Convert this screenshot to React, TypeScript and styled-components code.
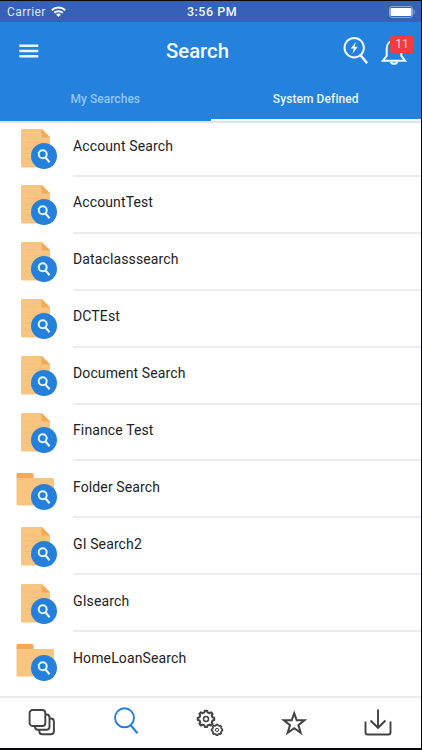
import React from 'react';
import styled, { createGlobalStyle } from 'styled-components';

const GlobalStyle = createGlobalStyle`
  * { box-sizing: border-box; }
  body { margin: 0; background: #000; }
`;

const Screen = styled.div`
  width: 422px;
  height: 750px;
  display: flex;
  flex-direction: column;
  background: #fff;
  border: solid #05070c;
  border-width: 1px 1px 2px 0;
  overflow: hidden;
  font-family: Roboto, 'Liberation Sans', sans-serif;
`;

const StatusBar = styled.div`
  height: 21px;
  flex: none;
  display: grid;
  grid-template-columns: 1fr auto 1fr;
  align-items: center;
  padding: 0 5px 0 7px;
  background: #3561b6;
  color: #dce8fa;
  font-size: 12px;
  letter-spacing: 0.42px;
`;

const Carrier = styled.div`
  display: flex;
  align-items: center;
  gap: 5px;
`;

const Clock = styled.div`
  padding-left: 1px;
  color: #f4f8ff;
  font-weight: 500;
  font-size: 12.5px;
  letter-spacing: 0.5px;
`;

const Battery = styled.svg`
  justify-self: end;
`;

const Header = styled.header`
  height: 58px;
  flex: none;
  display: grid;
  grid-template-columns: 75px 1fr 90px;
  align-items: center;
  padding: 0 0 0 19px;
  background: #2481de;
`;

const Title = styled.h1`
  margin: 0 37px 0 0;
  padding-left: 7px;
  text-align: center;
  color: #f2fbff;
  font-size: 20.3px;
  font-weight: 500;
  line-height: 24px;
`;

const Actions = styled.div`
  display: flex;
  align-items: center;
  gap: 12px;
  padding-left: 12px;
`;

const BellBox = styled.div`
  position: relative;
  height: 28px;
`;

const Badge = styled.span`
  position: absolute;
  left: 9px;
  top: -1px;
  width: 24px;
  height: 17px;
  border-radius: 3px;
  background: #f43b3f;
  color: #ffd6d6;
  font-size: 12px;
  line-height: 17px;
  text-align: center;
`;

const Tabs = styled.div`
  height: 41px;
  flex: none;
  display: grid;
  grid-template-columns: 1fr 1fr;
  background: #2481de;
`;

const Tab = styled.div<{ $active?: boolean }>`
  display: flex;
  justify-content: center;
  padding-top: 11px;
  font-size: 12px;
  line-height: 16px;
  font-weight: 500;
  letter-spacing: ${(p) => (p.$active ? '0.09px' : '0.04px')};
  color: ${(p) => (p.$active ? '#e9f6ff' : '#8fc7f7')};
  border-bottom: ${(p) => (p.$active ? '2px solid #f8fcff' : '0')};
`;

const List = styled.main`
  flex: 1;
  min-height: 0;
  border-top: 2px solid #dfe2e8;
`;

const Row = styled.div`
  height: 56.9px;
  display: flex;
  align-items: flex-start;
  padding-left: 15px;
`;

const IconCell = styled.div`
  width: 58px;
  flex: none;
  padding-top: 0.5px;
`;

const Label = styled.div<{ $last?: boolean }>`
  flex: 1;
  height: 54px;
  padding-top: 12.5px;
  font-size: 14px;
  line-height: 20px;
  letter-spacing: 0.12px;
  color: #222;
  border-bottom: ${(p) => (p.$last ? '0' : '2px solid #ececed')};
`;

const BottomBar = styled.nav`
  height: 52px;
  flex: none;
  display: grid;
  grid-template-columns: repeat(5, 84px);
  border-top: 2px solid #ececed;
`;

const NavItem = styled.div<{ $active?: boolean }>`
  display: flex;
  justify-content: center;
  padding-top: ${(p) => (p.$active ? '9px' : '11px')};
  color: ${(p) => (p.$active ? '#287fdb' : '#424242')};
`;

const Magnifier = () => (
  <>
    <circle cx="29" cy="32" r="13" fill="#2480da" />
    <circle cx="27.7" cy="30.2" r="4" fill="none" stroke="#e9f7ff" strokeWidth="2" />
    <path d="M30.3 33.3l4.3 5" stroke="#e9f7ff" strokeWidth="2.2" />
  </>
);

const DocumentIcon = () => (
  <svg width="44" height="48" viewBox="0 0 44 48">
    <path d="M7.5 5H27l8 8v30.5H7.5a1.5 1.5 0 0 1-1.5-1.5V6.5A1.5 1.5 0 0 1 7.5 5z" fill="#f8c581" />
    <path d="M26.5 5l8.5 8.5h-8.5z" fill="#f3a956" />
    <path d="M10 13h12M10 18.5h21M10 24h20M10 29.5h8M10 35h8" stroke="#f3be7b" strokeWidth="1" />
    <Magnifier />
  </svg>
);

const FolderIcon = () => (
  <svg width="44" height="48" viewBox="0 0 44 48">
    <path d="M3 8h14a1.5 1.5 0 0 1 1.5 1.5V13h-17V9.5A1.5 1.5 0 0 1 3 8z" fill="#f2a95c" />
    <path d="M1.5 13H37.5A1.5 1.5 0 0 1 39 14.5V39a1.5 1.5 0 0 1-1.5 1.5H3A1.5 1.5 0 0 1 1.5 39z" fill="#f8c581" />
    <Magnifier />
  </svg>
);

const MenuIcon = () => (
  <svg width="20" height="14" viewBox="0 0 20 14">
    <path d="M.3 1.8h19M.3 7h19M.3 12.2h19" stroke="#e8f7ff" strokeWidth="2.4" />
  </svg>
);

const QuickSearchIcon = () => (
  <svg width="26" height="28" viewBox="0 0 26 28" fill="none" stroke="#edfaff">
    <circle cx="11.2" cy="10.7" r="9.7" strokeWidth="2" />
    <path d="M17.6 18.2l6.5 8" strokeWidth="2.5" />
    <path d="M13 4.7l-5.300 6.700h3l-1.200 5.300 5.200-7h-3z" fill="#edfaff" stroke="none" />
  </svg>
);

const BellIcon = () => (
  <svg width="26" height="28" viewBox="0 0 26 28" fill="none" stroke="#edfaff" strokeWidth="2">
    <path d="M1.8 23.8h22.4l-3.9-4.8v-7.2c0-5-3-8.2-7.3-8.2s-7.3 3.2-7.3 8.2V19z" />
    <path d="M9.7 24.500c.5 3 6.100 3 6.600 0" />
  </svg>
);

const WifiIcon = () => (
  <svg width="15" height="11" viewBox="0 0 15 11" fill="none" stroke="#fff" strokeWidth="2">
    <path d="M.8 4.2c3.7-3.6 9.7-3.6 13.4 0M3.3 6.8c2.3-2.2 6.1-2.2 8.4 0" />
    <path d="M5.1 8.4c1.4-1.1 3.4-1.1 4.8 0L7.5 11z" fill="#fff" stroke="none" />
  </svg>
);

const StackIcon = () => (
  <svg width="28" height="28" viewBox="0 0 28 28" fill="none" stroke="currentColor" strokeWidth="1.9">
    <rect x="1.6" y="1" width="15.7" height="16" rx="3" />
    <path d="M17.3 5.5h1.2a3 3 0 0 1 3 3v9.3a3 3 0 0 1-3 3H10a3 3 0 0 1-3-3v-.8" />
    <path d="M21.7 9.5h1.2a3 3 0 0 1 3 3v9.8a3 3 0 0 1-3 3h-8.6a3 3 0 0 1-3-3v-1.5" />
  </svg>
);

const SearchIcon = () => (
  <svg width="26" height="28" viewBox="0 0 26 28" fill="none" stroke="currentColor" strokeWidth="1.9">
    <circle cx="11.5" cy="10.8" r="9.5" />
    <path d="M17.7 18.300l6.800 8" strokeWidth="2.2" />
  </svg>
);

const gearPath = (cx: number, cy: number, outer: number, inner: number, teeth: number) => {
  const step = (Math.PI * 2) / teeth;
  const points: string[] = [];
  for (let i = 0; i < teeth; i++) {
    [[-0.3, inner], [-0.18, outer], [0.18, outer], [0.3, inner]].forEach(([t, r]) => {
      const a = (i + t) * step;
      points.push(`${(cx + r * Math.sin(a)).toFixed(2)} ${(cy - r * Math.cos(a)).toFixed(2)}`);
    });
  }
  return `M${points.join('L')}Z`;
};

const GearsIcon = () => (
  <svg width="28" height="28" viewBox="0 0 28 28" fill="none" stroke="currentColor" strokeLinejoin="round">
    <path d={gearPath(10, 9.9, 8.3, 6.7, 8)} strokeWidth="2" />
    <circle cx="10" cy="9.9" r="2.5" strokeWidth="1.5" />
    <path d={gearPath(21, 20.9, 5.5, 4.5, 8)} strokeWidth="1.5" />
    <circle cx="21" cy="20.9" r="1.6" strokeWidth="1" />
  </svg>
);

const StarIcon = () => (
  <svg width="26" height="28" viewBox="0 0 26 28" fill="none" stroke="currentColor" strokeWidth="2">
    <path d="M13.2 4.2l2.5 7.1h7.8l-6.1 4.8 2.3 7.7-6.5-4.6-6.5 4.6L9 16.100l-6.100-4.800h7.800z" />
  </svg>
);

const DownloadIcon = () => (
  <svg width="28" height="28" viewBox="0 0 28 28" fill="none" stroke="currentColor" strokeWidth="1.9">
    <path d="M1.5 12.5v11a2 2 0 0 0 2 2h21a2 2 0 0 0 2-2v-11M14 .5v18.3M6.5 11.5l7.5 7.3 7.5-7.3" />
  </svg>
);

const searches: { name: string; folder?: boolean }[] = [
  { name: 'Account Search' },
  { name: 'AccountTest' },
  { name: 'Dataclasssearch' },
  { name: 'DCTEst' },
  { name: 'Document Search' },
  { name: 'Finance Test' },
  { name: 'Folder Search', folder: true },
  { name: 'GI Search2' },
  { name: 'GIsearch' },
  { name: 'HomeLoanSearch', folder: true },
];

export default function App() {
  return (
    <>
      <GlobalStyle />
      <Screen>
        <StatusBar>
          <Carrier>
            Carrier
            <WifiIcon />
          </Carrier>
          <Clock>3:56 PM</Clock>
          <Battery width="27" height="12" viewBox="0 0 27 12">
            <rect x=".5" y=".5" width="23" height="11" rx="2.5" fill="none" stroke="#85a6de" />
            <rect x="1.5" y="2" width="21" height="8" rx="1" fill="#fff" />
            <path d="M25.2 4v4" stroke="#7599d6" strokeWidth="1.3" />
          </Battery>
        </StatusBar>
        <Header>
          <MenuIcon />
          <Title>Search</Title>
          <Actions>
            <QuickSearchIcon />
            <BellBox>
              <BellIcon />
              <Badge>11</Badge>
            </BellBox>
          </Actions>
        </Header>
        <Tabs>
          <Tab>My Searches</Tab>
          <Tab $active>System Defined</Tab>
        </Tabs>
        <List>
          {searches.map((s, i) => (
            <Row key={s.name}>
              <IconCell>{s.folder ? <FolderIcon /> : <DocumentIcon />}</IconCell>
              <Label $last={i === searches.length - 1}>{s.name}</Label>
            </Row>
          ))}
        </List>
        <BottomBar>
          <NavItem><StackIcon /></NavItem>
          <NavItem $active><SearchIcon /></NavItem>
          <NavItem><GearsIcon /></NavItem>
          <NavItem><StarIcon /></NavItem>
          <NavItem><DownloadIcon /></NavItem>
        </BottomBar>
      </Screen>
    </>
  );
}
